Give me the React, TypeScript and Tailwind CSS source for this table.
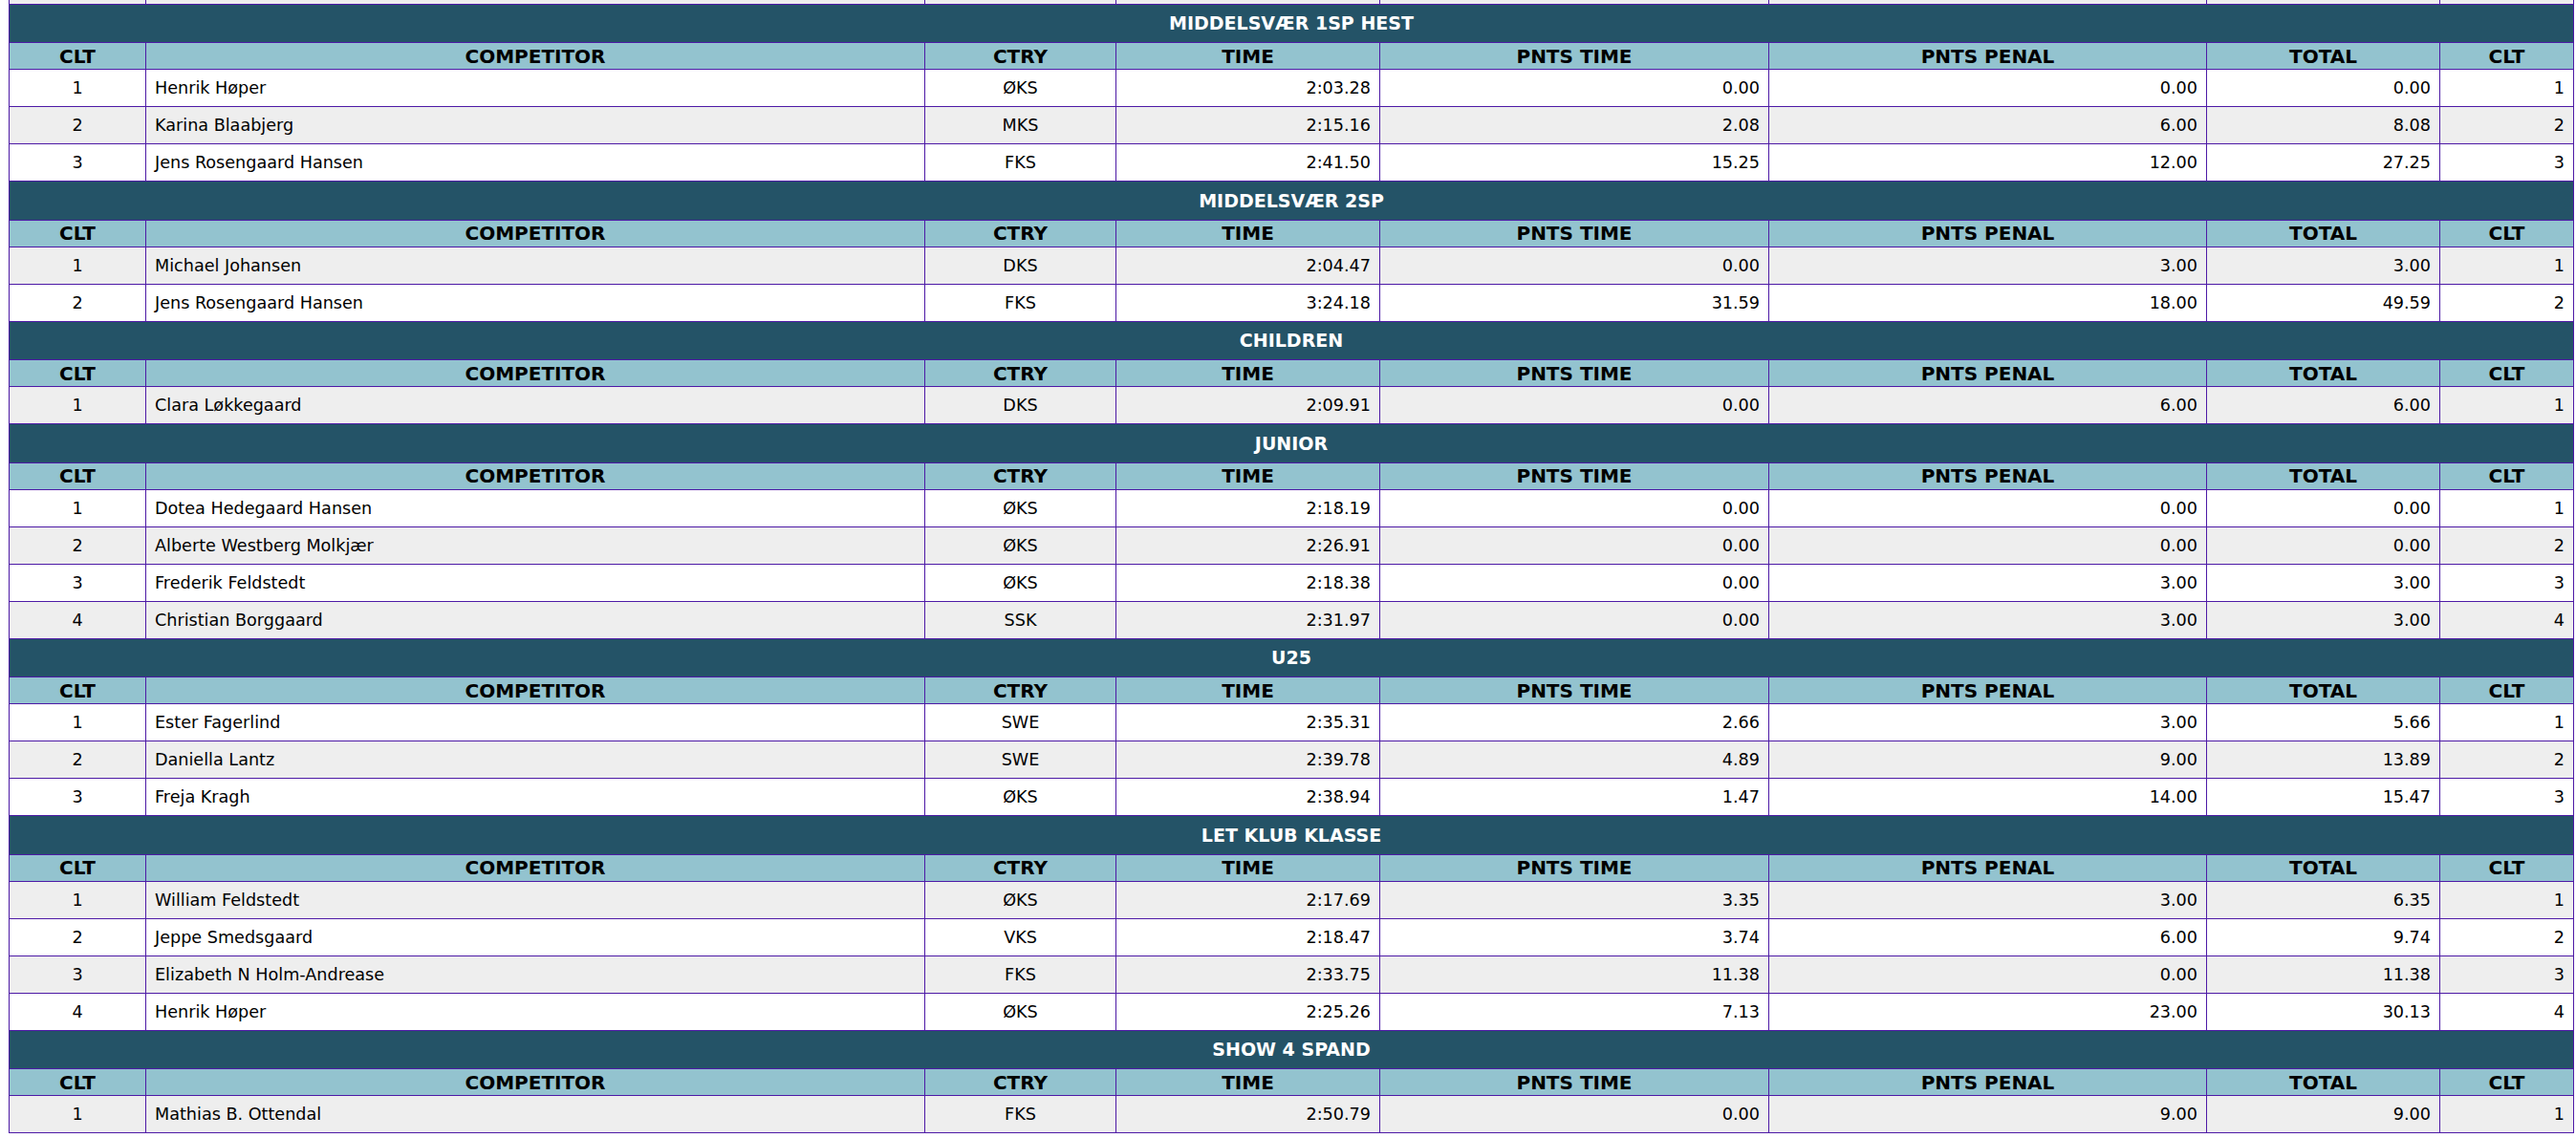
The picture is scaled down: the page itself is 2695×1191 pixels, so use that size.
import React from 'react';

type ResultRow = [number, string, string, string, string, string, string, number];

interface Section {
  title: string;
  rows: ResultRow[];
}

const sections: Section[] = [
  {
    title: 'MIDDELSVÆR 1SP HEST',
    rows: [
      [1, 'Henrik Høper', 'ØKS', '2:03.28', '0.00', '0.00', '0.00', 1],
      [2, 'Karina Blaabjerg', 'MKS', '2:15.16', '2.08', '6.00', '8.08', 2],
      [3, 'Jens Rosengaard Hansen', 'FKS', '2:41.50', '15.25', '12.00', '27.25', 3],
    ],
  },
  {
    title: 'MIDDELSVÆR 2SP',
    rows: [
      [1, 'Michael Johansen', 'DKS', '2:04.47', '0.00', '3.00', '3.00', 1],
      [2, 'Jens Rosengaard Hansen', 'FKS', '3:24.18', '31.59', '18.00', '49.59', 2],
    ],
  },
  {
    title: 'CHILDREN',
    rows: [[1, 'Clara Løkkegaard', 'DKS', '2:09.91', '0.00', '6.00', '6.00', 1]],
  },
  {
    title: 'JUNIOR',
    rows: [
      [1, 'Dotea Hedegaard Hansen', 'ØKS', '2:18.19', '0.00', '0.00', '0.00', 1],
      [2, 'Alberte Westberg Molkjær', 'ØKS', '2:26.91', '0.00', '0.00', '0.00', 2],
      [3, 'Frederik Feldstedt', 'ØKS', '2:18.38', '0.00', '3.00', '3.00', 3],
      [4, 'Christian Borggaard', 'SSK', '2:31.97', '0.00', '3.00', '3.00', 4],
    ],
  },
  {
    title: 'U25',
    rows: [
      [1, 'Ester Fagerlind', 'SWE', '2:35.31', '2.66', '3.00', '5.66', 1],
      [2, 'Daniella Lantz', 'SWE', '2:39.78', '4.89', '9.00', '13.89', 2],
      [3, 'Freja Kragh', 'ØKS', '2:38.94', '1.47', '14.00', '15.47', 3],
    ],
  },
  {
    title: 'LET KLUB KLASSE',
    rows: [
      [1, 'William Feldstedt', 'ØKS', '2:17.69', '3.35', '3.00', '6.35', 1],
      [2, 'Jeppe Smedsgaard', 'VKS', '2:18.47', '3.74', '6.00', '9.74', 2],
      [3, 'Elizabeth N Holm-Andrease', 'FKS', '2:33.75', '11.38', '0.00', '11.38', 3],
      [4, 'Henrik Høper', 'ØKS', '2:25.26', '7.13', '23.00', '30.13', 4],
    ],
  },
  {
    title: 'SHOW 4 SPAND',
    rows: [[1, 'Mathias B. Ottendal', 'FKS', '2:50.79', '0.00', '9.00', '9.00', 1]],
  },
];

const headers = ['CLT', 'COMPETITOR', 'CTRY', 'TIME', 'PNTS TIME', 'PNTS PENAL', 'TOTAL', 'CLT'];

// text alignment per column in the result rows
const align = [
  'text-center',
  'text-left',
  'text-center',
  'text-right',
  'text-right',
  'text-right',
  'text-right',
  'text-right',
];

const colWidths = ['w-[143px]', 'w-[815px]', 'w-[200px]', 'w-[276px]', 'w-[407px]', 'w-[458px]', 'w-[244px]', 'w-[140px]'];

export default function App() {
  // rows alternate over the whole table, section and header rows included
  let rowIndex = 0;
  const nextBg = () => {
    const bg = rowIndex % 2 === 0 ? 'bg-[#eeeeee]' : 'bg-white';
    rowIndex++;
    return bg;
  };

  const body: React.ReactNode[] = [];

  // bottom of the previous section's last row, scrolled mostly out of view
  body.push(
    <tr key="spill" className={nextBg()}>
      {colWidths.map((_, i) => (
        <td key={i} className="h-[4px] p-0 leading-none border-x border-b border-[#4d1aa6]" />
      ))}
    </tr>
  );

  sections.forEach((section) => {
    nextBg();
    body.push(
      <tr key={section.title + '-title'}>
        <td
          colSpan={8}
          className="h-[40.5px] p-0 bg-[#245367] border border-[#4d1aa6] text-center text-white font-bold text-[19px] leading-[22px] align-middle"
        >
          {section.title}
        </td>
      </tr>
    );
    nextBg();
    body.push(
      <tr key={section.title + '-head'}>
        {headers.map((h, i) => (
          <th
            key={i}
            className="h-[28px] p-0 bg-[#93c3cf] border border-[#4d1aa6] text-center text-black font-bold text-[20px] leading-[22px] align-middle"
          >
            {h}
          </th>
        ))}
      </tr>
    );
    section.rows.forEach((row, r) => {
      const bg = nextBg();
      body.push(
        <tr key={section.title + '-' + r} className={bg}>
          {row.map((cell, i) => (
            <td
              key={i}
              className={`h-[39px] px-[9px] py-0 border border-[#4d1aa6] text-black text-[17.6px] leading-[22px] align-middle ${align[i]}`}
            >
              {cell}
            </td>
          ))}
        </tr>
      );
    });
  });

  return (
    <div className="w-[2695px] h-[1191px] overflow-hidden bg-white pl-[9px] font-['DejaVu_Sans',Verdana,sans-serif]">
      <table className="w-[2683px] table-fixed border-collapse">
        <colgroup>
          {colWidths.map((w, i) => (
            <col key={i} className={w} />
          ))}
        </colgroup>
        <tbody>{body}</tbody>
      </table>
    </div>
  );
}
